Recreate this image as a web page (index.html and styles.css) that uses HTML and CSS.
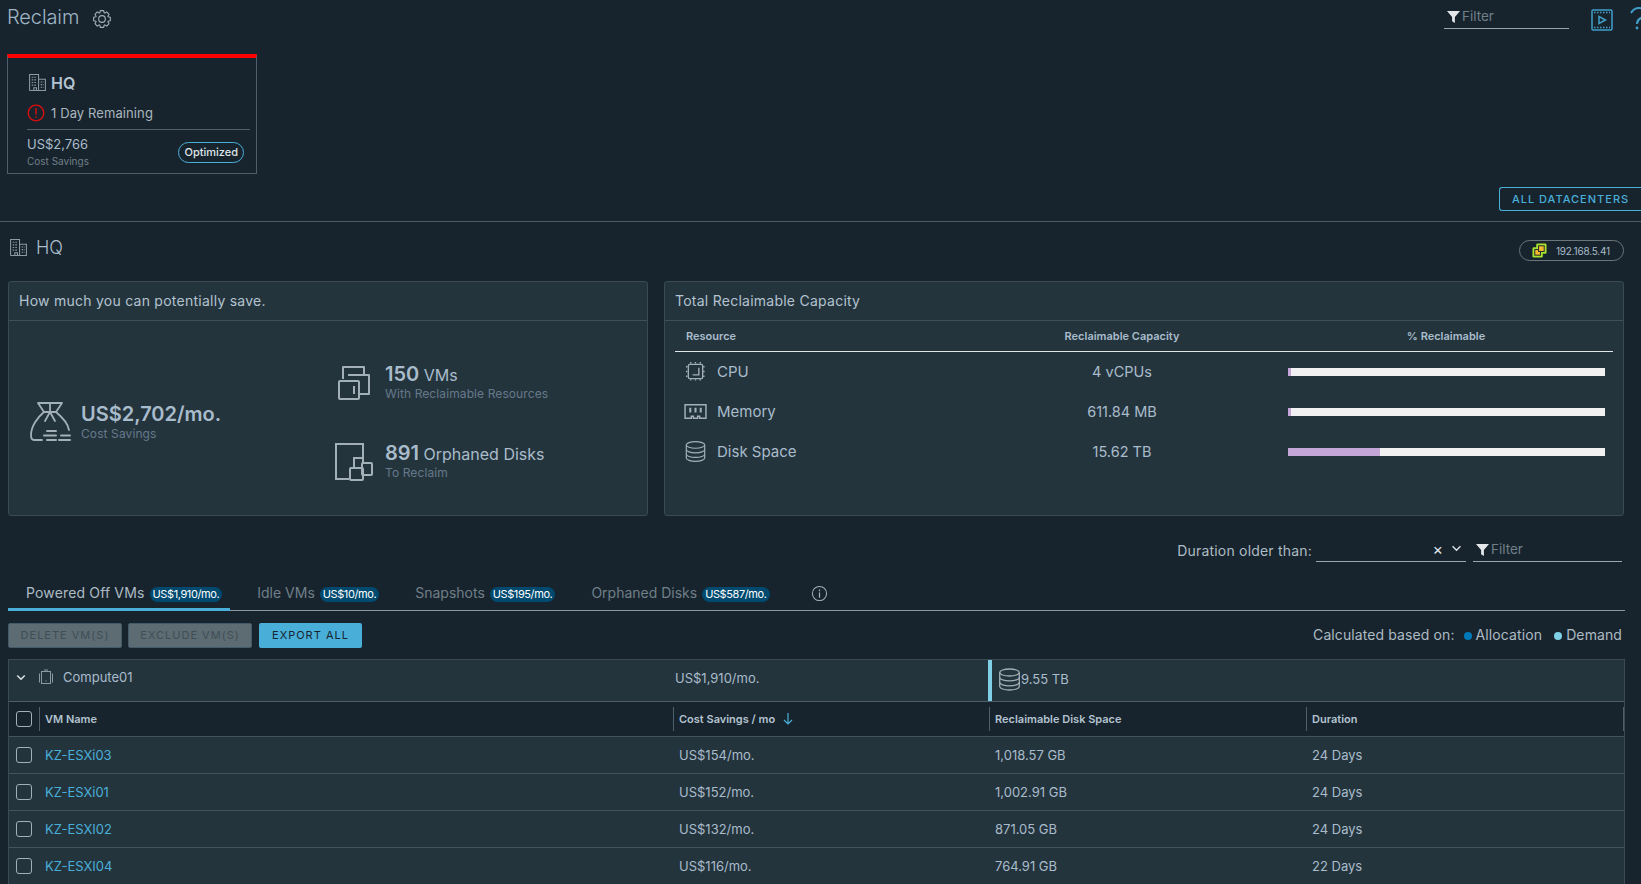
FILE: index.html
```html
<!DOCTYPE html>
<html lang="en">
<head>
<meta charset="utf-8">
<title>Reclaim</title>
<link rel="stylesheet" href="styles.css">
</head>
<body>
<svg class="defs" width="0" height="0" aria-hidden="true">
  <symbol id="i-building" viewBox="0 0 36 36">
    <path fill="none" stroke="currentColor" stroke-width="2" d="M3 33V3h17v30M20 12h13v21H3M11 33v-5h5v5"/>
    <path fill="none" stroke="currentColor" stroke-width="2" stroke-dasharray="3 2" d="M7 8h10M7 13h10M7 18h10M7 23h10M24 17h6M24 22h6M24 27h6"/>
  </symbol>
  <symbol id="i-disk" viewBox="3 2 30 32">
    <g fill="none" stroke="currentColor" stroke-width="1.800">
      <ellipse cx="18" cy="8" rx="14" ry="5"/>
      <path d="M4 8v20c0 2.800 6.300 5 14 5s14-2.200 14-5V8"/>
      <path d="M4 15c0 2.800 6.300 5 14 5s14-2.200 14-5M4 22c0 2.800 6.300 5 14 5s14-2.200 14-5"/>
    </g>
  </symbol>
  <symbol id="i-filter" viewBox="0 0 14 14">
    <path fill="currentColor" d="M0 1h14L8.500 7.500V14l-3-2V7.500z"/>
  </symbol>
</svg>

<section class="top">
  <header class="page-head">
    <div class="title-wrap">
      <h1 class="page-title">Reclaim</h1>
      <svg class="gear" viewBox="0 0 36 36"><g fill="none" stroke="currentColor" stroke-width="2" stroke-linejoin="round"><circle cx="18" cy="18" r="6"/><polygon points="14,7 15,3 21,3 22,7 22.950,7.400 26.490,5.270 30.730,9.510 28.600,13.050 29,14 33,15 33,21 29,22 28.600,22.950 30.730,26.490 26.490,30.730 22.950,28.600 22,29 21,33 15,33 14,29 13.050,28.600 9.510,30.730 5.270,26.490 7.400,22.950 7,22 3,21 3,15 7,14 7.400,13.050 5.270,9.510 9.510,5.270 13.050,7.400"/></g></svg>
    </div>
    <div class="head-tools">
      <div class="filter filter-top"><svg class="filter-icon"><use href="#i-filter"/></svg><span>Filter</span></div>
      <svg class="video" viewBox="0 0 22 22"><g fill="none" stroke="currentColor" stroke-width="1.500"><rect x="1" y="1" width="20" height="20" rx="1"/><path d="M8 7.500v7l6.500-3.500z"/><path stroke-dasharray="1.500 1.500" d="M3 3.500h16M3 18.500h16"/></g></svg>
      <svg class="help" viewBox="0 0 11 24"><g fill="none" stroke="currentColor" stroke-width="2"><path d="M1 6C3 2.500 6 1 9 1s5 1 6 4-2 5-4 6-4 2.500-4 6"/></g><circle cx="7" cy="21" r="1.400" fill="currentColor"/></svg>
    </div>
  </header>

  <article class="dc-card">
    <div class="dc-name"><svg class="dc-building"><use href="#i-building"/></svg><strong>HQ</strong></div>
    <div class="dc-remaining">
      <svg class="alert" viewBox="0 0 18 18"><circle cx="9" cy="9" r="7.800" fill="none" stroke="currentColor" stroke-width="1.300"/><path stroke="currentColor" stroke-width="1.400" d="M9 4v6.500M9 12.300v1.500"/></svg>
      <span>1 Day Remaining</span>
    </div>
    <div class="dc-foot">
      <div><div class="dc-cost">US$2,766</div><div class="dc-sub">Cost Savings</div></div>
      <span class="pill-opt">Optimized</span>
    </div>
  </article>

  <div class="top-actions"><button class="btn-outline">ALL DATACENTERS</button></div>
</section>

<section class="hq-bar">
  <div class="hq-title"><svg class="hq-icon"><use href="#i-building"/></svg><h2>HQ</h2></div>
  <div class="host-pill">
    <svg class="host-logo" viewBox="0 0 16 16"><rect x="4.500" y="0.500" width="11" height="11" rx="1.500" fill="#a6e22e"/><rect x="0.500" y="4.500" width="11" height="11" rx="1.500" fill="#a6e22e"/><rect x="3" y="7" width="6" height="6" fill="#f5b82e" stroke="#17242d"/><rect x="7" y="3" width="6" height="6" fill="#f5b82e" stroke="#17242d"/></svg>
    <span>192.168.5.41</span>
  </div>
</section>

<section class="panels">
  <article class="panel panel-save">
    <h3 class="panel-title">How much you can potentially save.</h3>
    <div class="save-body">
      <div class="stat stat-main">
        <svg class="ico-bag" viewBox="0 0 41 41"><g fill="none" stroke="currentColor" stroke-width="1.800" stroke-linecap="round" stroke-linejoin="round"><path d="M8 1h24l-6 9H14z"/><path d="M14 10C8 15 1 24 1 33c0 3 1 5 3 5h8"/><path d="M26 10c6 5 12 11 13 18"/><path d="M20 2v8M20 10l-5 9M20 10l5 9"/><path stroke-width="2" d="M17 29h9M14 33.500h12M31 33.500h9M17 38h9M29 38h11"/></g></svg>
        <div><div class="stat-big">US$2,702/mo.</div><div class="stat-sub">Cost Savings</div></div>
      </div>
      <div class="stat-col">
        <div class="stat">
          <svg class="ico-vms" viewBox="-3 -2 38 38"><g fill="none" stroke="currentColor" stroke-width="2" stroke-linejoin="round"><path d="M5 13V1h21v7"/><path d="M10 9h21v19H21"/><rect x="1" y="15" width="20" height="18" rx="1"/><path d="M16 20v8"/></g></svg>
          <div><div class="stat-line"><b>150</b> VMs</div><div class="stat-sub">With Reclaimable Resources</div></div>
        </div>
        <div class="stat">
          <svg class="ico-orph" viewBox="0 0 38 38"><g fill="none" stroke="currentColor" stroke-width="2"><path d="M28 15V1H1v35h13"/><rect x="27" y="20" width="10" height="12" rx="1"/><rect x="15" y="25" width="13" height="12" rx="1"/><path d="M19 25V15h9v5"/></g></svg>
          <div><div class="stat-line"><b>891</b> Orphaned Disks</div><div class="stat-sub">To Reclaim</div></div>
        </div>
      </div>
    </div>
  </article>

  <article class="panel panel-cap">
    <h3 class="panel-title">Total Reclaimable Capacity</h3>
    <div class="cap-table">
      <div class="cap-row cap-head"><span>Resource</span><span class="c">Reclaimable Capacity</span><span class="c pct">% Reclaimable</span></div>
      <div class="cap-row">
        <span class="res"><svg class="res-ico" viewBox="0 0 22 22"><g fill="none" stroke="currentColor" stroke-width="1.400"><rect x="3.500" y="3.500" width="15" height="15" rx="1.500"/><path d="M14.500 7v7.500H8"/><path stroke-dasharray="1.500 1.500" d="M6 1v2M11 1v2M16 1v2M6 19v2M11 19v2M16 19v2M1 6h2M1 11h2M1 16h2M19 6h2M19 11h2M19 16h2"/></g></svg>CPU</span>
        <span class="c">4 vCPUs</span>
        <div class="bar"><div class="bar-fill" style="width:1%"></div></div>
      </div>
      <div class="cap-row">
        <span class="res"><svg class="res-ico res-ico-mem" viewBox="0 0 22 15"><g fill="none" stroke="currentColor" stroke-width="1.400"><path d="M1 1h20v13h-6v-2h-2v2H9v-2H7v2H1z"/><path stroke-width="2" d="M6 4v4.500M11 4v4.500M16 4v4.500"/></g></svg>Memory</span>
        <span class="c">611.84 MB</span>
        <div class="bar"><div class="bar-fill" style="width:1%"></div></div>
      </div>
      <div class="cap-row">
        <span class="res"><svg class="res-ico"><use href="#i-disk"/></svg>Disk Space</span>
        <span class="c">15.62 TB</span>
        <div class="bar"><div class="bar-fill" style="width:29%"></div></div>
      </div>
    </div>
  </article>
</section>

<section class="duration">
  <span class="dur-label">Duration older than:</span>
  <div class="dur-select"><span class="x">×</span><svg class="chev" viewBox="0 0 12 8"><path fill="none" stroke="currentColor" stroke-width="1.500" d="M1.500 1.500L6 6l4.500-4.500"/></svg></div>
  <div class="filter filter-dur"><svg class="filter-icon"><use href="#i-filter"/></svg><span>Filter</span></div>
</section>

<nav class="tabs">
  <div class="tab active">Powered Off VMs <span class="chip">US$1,910/mo.</span></div>
  <div class="tab">Idle VMs <span class="chip">US$10/mo.</span></div>
  <div class="tab">Snapshots <span class="chip">US$195/mo.</span></div>
  <div class="tab">Orphaned Disks <span class="chip">US$587/mo.</span></div>
  <svg class="info" viewBox="0 0 18 18"><circle cx="9" cy="9" r="7.500" fill="none" stroke="currentColor" stroke-width="1.100"/><path stroke="currentColor" stroke-width="1.300" d="M9 8v5.500M9 4.800v1.700"/></svg>
</nav>

<section class="actions">
  <div class="btns">
    <button class="btn btn-off">DELETE VM(S)</button>
    <button class="btn btn-off">EXCLUDE VM(S)</button>
    <button class="btn btn-on">EXPORT ALL</button>
  </div>
  <div class="calc">Calculated based on: <i class="dot dot-a"></i> Allocation <i class="dot dot-d"></i> Demand</div>
</section>

<section class="grid">
  <div class="group">
    <div class="group-name">
      <svg class="chev chev-g" viewBox="0 0 12 8"><path fill="none" stroke="currentColor" stroke-width="1.700" d="M1.500 1.500L6 6l4.500-4.500"/></svg>
      <svg class="cluster" viewBox="0 0 16 16"><g fill="none" stroke="currentColor" stroke-width="1"><rect x="3.500" y="2.500" width="9" height="12"/><path d="M1.500 4.500v9M14.500 4.500v9M6 1h4"/><path d="M8 11.500v1"/></g></svg>
      <span>Compute01</span>
    </div>
    <div class="group-cost">US$1,910/mo.</div>
    <div class="group-disk"><svg class="group-ico"><use href="#i-disk"/></svg><span>9.55 TB</span></div>
  </div>
  <div class="row row-head">
    <div class="cell cb-cell"><span class="cb"></span></div>
    <div class="cell sep">VM Name</div>
    <div class="cell sep">Cost Savings / mo <svg class="sort" viewBox="0 0 10 12"><path fill="none" stroke="currentColor" stroke-width="1.200" d="M5 0v11M1 7l4 4 4-4"/></svg></div>
    <div class="cell sep">Reclaimable Disk Space</div>
    <div class="cell sep sep-end">Duration</div>
  </div>
  <div class="row"><div class="cell cb-cell"><span class="cb"></span></div><div class="cell"><a class="link">KZ-ESXi03</a></div><div class="cell">US$154/mo.</div><div class="cell">1,018.57 GB</div><div class="cell">24 Days</div></div>
  <div class="row"><div class="cell cb-cell"><span class="cb"></span></div><div class="cell"><a class="link">KZ-ESXi01</a></div><div class="cell">US$152/mo.</div><div class="cell">1,002.91 GB</div><div class="cell">24 Days</div></div>
  <div class="row"><div class="cell cb-cell"><span class="cb"></span></div><div class="cell"><a class="link">KZ-ESXI02</a></div><div class="cell">US$132/mo.</div><div class="cell">871.05 GB</div><div class="cell">24 Days</div></div>
  <div class="row"><div class="cell cb-cell"><span class="cb"></span></div><div class="cell"><a class="link">KZ-ESXI04</a></div><div class="cell">US$116/mo.</div><div class="cell">764.91 GB</div><div class="cell">22 Days</div></div>
</section>
</body>
</html>
```
FILE: styles.css
```css
* { box-sizing: border-box; }
html, body { margin: 0; height: 884px; overflow: hidden; }
body { background: #18242d; color: #adbbc4; font-family: Inter, "Liberation Sans", sans-serif; font-size: 14px; width: 1641px; }
.defs { position: absolute; }
h1, h2, h3 { margin: 0; font-weight: 400; }
button { font-family: inherit; cursor: default; }

.top { height: 222px; border-bottom: 1px solid #4f5b63; display: flex; flex-direction: column; padding-left: 7px; }
.page-head { height: 54px; display: flex; justify-content: space-between; align-items: flex-start; overflow: hidden; }
.title-wrap { display: flex; align-items: center; gap: 13px; height: 34px; }
.page-title { font-size: 20px; color: #9fb5c6; font-weight: 300; letter-spacing: -0.1px; }
.gear { width: 20px; height: 20px; color: #a3b0b8; margin-top: 3px; }
.head-tools { display: flex; align-items: flex-start; flex: none; }
.filter { display: flex; align-items: center; color: #6f7f88; font-size: 13.500px; border-bottom: 1px solid #9aa6ad; }
.filter-top { width: 125px; height: 29px; padding: 4px 0 0 3px; margin-right: 22px; }
.filter-icon { width: 13px; height: 13px; color: #e3e7ea; margin-right: 2px; flex: none; }
.video { width: 22px; height: 22px; color: #3f9fc9; margin-top: 9px; }
.help { width: 11px; height: 24px; margin: 7px 0 0 17px; color: #3f9fc9; flex: none; }

.dc-card { width: 250px; height: 120px; border: 1px solid #4f5f6a; border-top: 4px solid #ff0000; padding: 6px 11px 0 19px; flex: none; }
.dc-name { display: flex; align-items: center; gap: 4px; height: 37px; padding-left: 1px; }
.dc-name strong { font-size: 16px; font-weight: 600; color: #b3c3d0; }
.dc-building { width: 19px; height: 19px; color: #8b9aa3; }
.dc-remaining { display: flex; align-items: center; gap: 6px; height: 24px; font-size: 13px; letter-spacing: 0.1px; color: #a9b6be; }
.alert { width: 18px; height: 18px; color: #e00d0d; }
.dc-foot { margin: 4px -5px 0 0; padding: 0 6px 2px 0; border-top: 1px solid #4f5f6a; display: flex; justify-content: space-between; align-items: center; height: 44px; }
.dc-cost { font-size: 13px; color: #a9bccb; margin-top: 1px; }
.dc-sub { font-size: 10px; color: #6f7f88; margin-top: 3px; }
.pill-opt { border: 1px solid #49afd9; border-radius: 11px; font-size: 11px; font-weight: 500; color: #dfe5e9; height: 21px; line-height: 19px; padding: 0 5px; margin-top: 3px; }

.top-actions { margin-top: auto; display: flex; justify-content: flex-end; padding-bottom: 10px; height: 34px; }
.btn-outline { width: 142px; height: 24px; background: transparent; border: 1px solid #49afd9; border-radius: 3px 0 0 3px; border-right: 0; color: #49afd9; font-size: 11px; font-weight: 500; letter-spacing: 1px; padding: 0; }

.hq-bar { display: flex; justify-content: space-between; align-items: center; height: 59px; padding: 0 17px 0 9px; }
.hq-title { display: flex; align-items: center; gap: 8px; padding-bottom: 8px; }
.hq-title h2 { font-size: 18px; font-weight: 300; color: #a9bccb; }
.hq-icon { width: 19px; height: 19px; color: #8b9aa3; }
.host-pill { display: flex; align-items: center; gap: 9px; width: 105px; height: 21px; margin-bottom: 2px; border: 1px solid #6a757c; border-radius: 11px; padding-left: 12px; font-size: 10px; color: #a9bccb; letter-spacing: -0.2px; }
.host-logo { width: 15px; height: 15px; flex: none; }

.panels { display: flex; gap: 16px; padding: 0 8px; height: 235px; }
.panel { background: #24343d; border: 1px solid #3b4a55; border-radius: 3px; }
.panel-save { width: 640px; }
.panel-cap { width: 960px; }
.panel-title { height: 39px; line-height: 38px; padding-left: 10px; font-size: 14px; font-weight: 400; letter-spacing: 0.25px; color: #b3c3d0; border-bottom: 1px solid #3f4e59; }

.save-body { display: flex; height: 194px; }
.stat { display: flex; align-items: center; }
.stat-main { width: 326px; padding-left: 21px; gap: 10px; margin-top: 7px; }
.ico-bag { width: 41px; height: 41px; color: #a3b0b8; flex: none; margin-top: 2px; }
.stat-big { font-size: 20px; font-weight: 600; color: #a9bccb; line-height: 24px; }
.stat-sub { font-size: 12px; letter-spacing: 0.1px; color: #66798a; line-height: 16px; }
.stat-col { display: flex; flex-direction: column; gap: 18px; padding-top: 31px; }
.stat-col .stat { gap: 12px; height: 61px; }
.ico-vms, .ico-orph { width: 38px; height: 38px; color: #a3b0b8; flex: none; }
.stat-line { font-size: 16px; color: #a9bccb; line-height: 22px; white-space: nowrap; }
.stat-line b { font-size: 20px; font-weight: 600; }

.cap-table { padding: 0 10px; }
.cap-row { display: grid; grid-template-columns: 285px 324px 1fr; align-items: center; height: 40px; color: #a9bccb; font-size: 14.500px; }
.cap-row .c { text-align: center; }
.cap-head { height: 31px; border-bottom: 1px solid #dfe5e9; font-size: 11px; font-weight: 600; color: #a9bccb; padding-left: 11px; grid-template-columns: 274px 324px 1fr; margin-bottom: -1px; }
.cap-row .pct { padding-right: 5px; }
.res { display: flex; align-items: center; gap: 11px; padding-left: 10px; font-size: 15px; }
.res-ico { width: 21px; height: 21px; color: #a3b0b8; flex: none; }
.res-ico-mem { width: 23px; margin-left: -1px; margin-right: -1px; }
.bar { height: 8px; width: 317px; margin: 2px 0 0 4px; background: #f1f1f1; }
.bar-fill { height: 100%; background: #c5a6d9; }

.duration { display: flex; justify-content: flex-end; align-items: flex-end; height: 46px; padding-right: 19px; }
.dur-label { font-size: 14px; letter-spacing: 0.2px; color: #adbbc4; margin-right: 4px; padding-bottom: 3px; }
.dur-select { width: 150px; height: 23px; border-bottom: 1px solid #9aa6ad; margin-right: 7px; display: flex; justify-content: flex-end; align-items: center; gap: 8px; padding: 0 4px 3px 0; color: #dfe5e9; }
.x { font-size: 16px; line-height: 16px; }
.chev { width: 11px; height: 7px; }
.filter-dur { width: 149px; height: 23px; padding: 0 0 2px 3px; }

.tabs { margin: 0 16px 0 8px; height: 49px; border-bottom: 1px solid #8c979e; display: flex; align-items: flex-end; }
.tab { height: 32px; line-height: 29px; padding: 0 9px 0 18px; font-size: 14px; color: #6f7f88; margin-right: 9px; white-space: nowrap; }
.tab.active { color: #adbbc4; border-bottom: 3px solid #49afd9; margin-bottom: -1px; height: 33px; letter-spacing: 0.15px; padding-right: 8px; }
.chip { display: inline-block; background: #004a70; color: #fff; border-radius: 8px; font-size: 11px; line-height: 15px; padding: 0 3px; letter-spacing: -0.4px; margin-left: 1px; }
.info { width: 17px; height: 17px; color: #a3b0b8; margin: 0 0 8px 23px; }

.actions { display: flex; justify-content: space-between; align-items: center; height: 48px; padding: 0 19px 0 8px; }
.btns { display: flex; gap: 6px; }
.btn { height: 25px; border-radius: 2px; font-size: 11px; letter-spacing: 1px; font-weight: 400; padding: 0; border: 1px solid transparent; }
.btn-off { background: #5d6b72; color: #3f4e57; border-color: #455a69; }
.btn-off:nth-child(1) { width: 114px; }
.btn-off:nth-child(2) { width: 124px; }
.btn-on { width: 103px; background: #49afd9; color: #17242d; margin-left: 1px; }
.calc { font-size: 14px; letter-spacing: 0.1px; color: #adbbc4; padding-bottom: 2px; }
.dot { display: inline-block; width: 8px; height: 8px; border-radius: 50%; margin-left: 5px; }
.dot-a { background: #0079b8; }
.dot-d { background: #7fd0e6; margin-left: 8px; }

.grid { margin: 0 16px 0 8px; border: 1px solid #3b4a55; border-bottom: 0; }
.group { display: grid; grid-template-columns: 664px 315px 1fr; height: 42px; background: #24343d; border-bottom: 1px solid #4f5f6a; align-items: center; }
.group-name { display: flex; align-items: center; padding-left: 7px; height: 100%; padding-bottom: 7px; font-size: 13px; color: #a9bccb; }
.chev-g { width: 10px; height: 7px; color: #dfe5e9; margin-right: 12px; }
.cluster { width: 16px; height: 16px; color: #8b9aa3; margin-right: 9px; }
.group-cost { font-size: 13px; color: #a9bccb; padding: 0 0 5px 2px; }
.group-disk { height: 100%; border-left: 4px solid #7fd0e6; display: flex; align-items: center; padding: 0 0 3px 7px; font-size: 13px; color: #a9bccb; }
.group-ico { width: 21px; height: 25px; color: #a3b0b8; flex: none; margin-right: 1px; }

.row { display: grid; grid-template-columns: 30px 634px 316px 317px 1fr; height: 37px; padding-bottom: 1px; background: #24343d; border-bottom: 1px solid #445360; align-items: center; font-size: 13px; color: #a9bccb; }
.row-head { height: 35px; padding-bottom: 0; background: #18242d; font-size: 11px; font-weight: 600; color: #b3c3d0; }
.cell { padding-left: 6px; white-space: nowrap; }
.cb-cell { padding-left: 7px; display: flex; }
.cb { width: 16px; height: 16px; border: 1px solid #a3b0b8; border-radius: 3px; }
.sep { border-left: 1px solid #4f5f6a; height: 24px; line-height: 24px; padding-left: 5px; }
.sep-end { border-right: 1px solid #4f5f6a; }
.sort { width: 10px; height: 12px; color: #49afd9; margin-left: 5px; vertical-align: -2px; }
.link { color: #49afd9; }
```
